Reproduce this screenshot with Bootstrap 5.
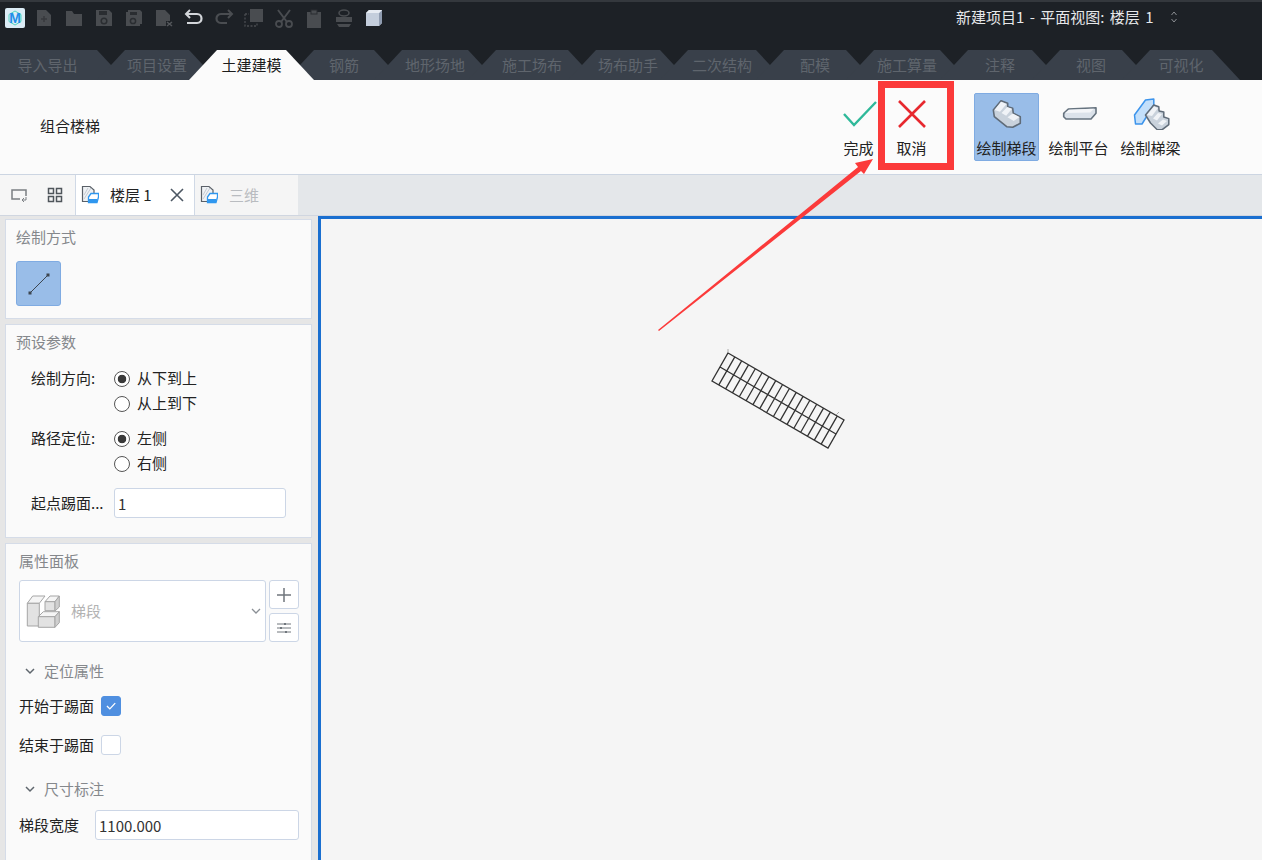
<!DOCTYPE html>
<html lang="zh-CN">
<head>
    <meta charset="UTF-8">
    <title>组合楼梯</title>
    <meta name="viewport" content="width=device-width, initial-scale=1">
    <link href="https://cdn.jsdelivr.net/npm/bootstrap@5.3.3/dist/css/bootstrap.min.css" rel="stylesheet">
    <style>
        html, body { height: 860px; overflow: hidden; }
        body {
            position: relative;
            background: #e6e6e6;
            font-family: "Noto Sans CJK SC", "Noto Sans", sans-serif;
            font-size: 15px;
            color: #222;
        }
        .app-head { height: 80px; background: #1d2126; border-top: 2px solid #34383d; }
        .quick-bar { height: 48px; padding-left: 5px; }
        .quick-btn { width: 30px; height: 32px; flex: none; }
        .logo-btn { width: 24px; margin-right: 0; }
        .doc-title { position: absolute; left: 956px; top: 6px; color: #e6e8ea; font-size: 15px; white-space: nowrap; word-spacing: 2px; }
        .doc-arrows { position: absolute; left: 1170px; top: 9px; }
        .ribbon-tabs { height: 30px; }
        .ribbon-tab {
            height: 30px; margin-left: -28px; flex: none;
            background: #39404a; color: #5f656d;
            clip-path: polygon(0 100%, 28px 0, calc(100% - 28px) 0, 100% 100%);
            font-size: 15px;
        }
        .ribbon-tab:nth-child(1) { margin-left: 0; width: 125px; clip-path: polygon(0 0, 97px 0, 100% 100%, 0 100%); padding-right: 30px; }
        .ribbon-tab:nth-child(2) { width: 120px; }
        .ribbon-tab:nth-child(3) { width: 125px; background: #fbfbfb; color: #1c1c1c; position: relative; z-index: 2; }
        .ribbon-tab:nth-child(4) { width: 116px; }
        .ribbon-tab:nth-child(5) { width: 122px; }
        .ribbon-tab:nth-child(6) { width: 128px; }
        .ribbon-tab:nth-child(7) { width: 120px; }
        .ribbon-tab:nth-child(8) { width: 124px; }
        .ribbon-tab:nth-child(9) { width: 118px; }
        .ribbon-tab:nth-child(10) { width: 122px; }
        .ribbon-tab:nth-child(11) { width: 120px; }
        .ribbon-tab:nth-child(12) { width: 118px; }
        .ribbon-tab:nth-child(13) { width: 118px; }

        .ribbon-body { height: 95px; background: #fbfbfb; border-bottom: 1px solid #ccd5e2; padding-left: 40px; padding-top: 13px; }
        .ribbon-name { width: 803px; padding-top: 22px; flex: none; }
        .tool-btn { height: 68px; flex: none; line-height: 1; }
        .tool-btn svg { display: block; margin: 0 auto; }
        .tool-ok { width: 31px; margin-right: 22px; padding-top: 6px; }
        .tool-no { width: 31px; margin-right: 47px; padding-top: 6px; }
        .tool-ok .tool-label, .tool-no .tool-label { margin-top: 11px; }
        .tool-stair { width: 65px; margin-right: 7px; padding-top: 4px; border: 1px solid transparent; border-radius: 2px; white-space: nowrap; }
        .tool-stair.is-on { background: #99bde8; border-color: #7fabe2; }
        .tool-label { display: block; white-space: nowrap; text-align: center; }
        .tool-stair .tool-label { margin-top: 10px; }

        .doc-tabs { height: 41px; background: #e4e7ea; border-bottom: 1px solid #d0d6e0; }
        .doc-side { width: 76px; background: #f6f6f6; border-right: 1px solid #d0d9e6; padding-right: 2px; }
        .doc-tab { height: 40px; padding-left: 5px; border-right: 1px solid #d0d9e6; }
        .doc-tab.is-open { width: 119px; background: #fff; }
        .doc-tab.is-idle { width: 103px; background: #f5f5f5; color: #b9bcc0; border-right: 0; }
        .doc-tab-name { margin-left: 11px; }
        .doc-tab-close { margin-left: auto; margin-right: 10px; }

        .work-area { height: 644px; }
        .side-col { width: 318px; padding: 3px 6px 0 5px; flex: none; }
        .side-panel { background: #fafafa; border: 1px solid #d5dce8; margin-bottom: 5px; }
        .panel-draw { height: 100px; padding: 6px 10px; }
        .panel-preset { height: 214px; padding: 6px 10px; }
        .panel-props { height: 340px; padding: 6px 11px 6px 13px; margin-bottom: 0; }
        .panel-title { color: #85888c; line-height: 22px; }
        .line-btn { width: 45px; height: 45px; margin-top: 13px; background: #99bde8; border: 1px solid #7fabe2; border-radius: 3px; }
        .preset-list { margin-top: 13px; }
        .preset-row { padding-left: 15px; height: 25px; }
        .preset-row.gap-next { margin-top: 10px; }
        .preset-row.has-input { margin-top: 12px; height: 30px; }
        .preset-label { width: 83px; flex: none; white-space: nowrap; }
        .side-col .form-check-input { margin: 0; float: none; flex: none; }
        .side-col input[type=radio] {
            width: 16px; height: 16px; margin-right: 7px;
            background-color: #fff; border: 1px solid #555; box-shadow: none;
        }
        .side-col input[type=radio]:checked {
            background-color: #fff; border-color: #555;
            --bs-form-check-bg-image: radial-gradient(circle, #3a3a3a 0, #3a3a3a 4px, transparent 4.6px);
        }
        .side-col .form-control {
            height: 30px; padding: 0 3px; border: 1px solid #ccd6e6; border-radius: 3px;
            font-size: 15px; color: #333; background: #fff; box-shadow: none; flex: none;
        }
        .start-input { width: 172px; }
        .side-col .width-input { width: 204px; }
        .type-row { margin-top: 8px; }
        .type-select { width: 247px; height: 62px; flex: none; background: #fff; border: 1px solid #ccd6e6; border-radius: 3px; color: #b3b3b3; padding: 0 4px 0 6px; }
        .type-name { margin-left: 11px; }
        .mini-col { margin-left: 3px; }
        .mini-btn { width: 30px; height: 29px; background: #fff; border: 1px solid #ccd6e6; border-radius: 3px; }
        .sect-head { height: 24px; color: #85888c; padding-left: 6px; }
        .sect-head span { margin-left: 9px; }
        .sect-first { margin-top: 17px; }
        .sect-next { margin-top: 22px; }
        .check-first { margin-top: 13px; height: 20px; }
        .check-next { margin-top: 19px; height: 20px; }
        .width-row { margin-top: 9px; }
        .prop-label { width: 82px; flex: none; white-space: nowrap; line-height: 20px; }
        .prop-label.is-short { width: 76px; }
        .side-col input[type=checkbox] { width: 20px; height: 20px; border: 1px solid #ccd6e6; border-radius: 3px; background-color: #fff; box-shadow: none; }
        .side-col input[type=checkbox]:checked {
            background-color: #4f8fe0; border-color: #4f8fe0;
            --bs-form-check-bg-image: url("data:image/svg+xml,%3csvg xmlns='http://www.w3.org/2000/svg' viewBox='0 0 20 20'%3e%3cpath fill='none' stroke='%23fff' stroke-width='1.500' d='M5.500 10l3.200 3.200 6-6.400'/%3e%3c/svg%3e");
        }
        .canvas-view { position: relative; flex: 1; background: #f5f5f5; border-left: 3px solid #1a6fd0; border-top: 3px solid #1a6fd0; }
        .stair-plan { position: absolute; left: 0; top: 0; }
        .note-box { position: absolute; left: 878px; top: 81px; width: 76px; height: 89px; border: 7px solid #fb3a3a; }
        .note-arrow { position: absolute; left: 0; top: 0; pointer-events: none; }
    </style>
</head>
<body>
<div class="app-head">
    <div class="quick-bar d-flex align-items-start">
        <div class="quick-btn logo-btn d-flex align-items-center">
            <svg width="20" height="20" viewBox="0 0 20 20"><rect width="20" height="20" rx="2" fill="#dcecf6"/><path d="M10 3l6 3.500v7L10 17l-6-3.500v-7z" fill="none" stroke="#53d6c0" stroke-width="1"/><text x="10" y="15" text-anchor="middle" font-family="Liberation Sans" font-weight="700" font-size="14" fill="#1e8fe8">M</text></svg>
        </div>
        <div class="quick-btn d-flex align-items-center justify-content-center"><svg width="18" height="18" viewBox="0 0 18 18"><path d="M2 1h9l5 5v11H2z" fill="#494c50"/><path d="M9 7v6M6 10h6" stroke="#37393d" stroke-width="1.500"/></svg></div>
        <div class="quick-btn d-flex align-items-center justify-content-center"><svg width="18" height="18" viewBox="0 0 18 18"><path d="M1 2h6l2 3h8v12H1z" fill="#494c50"/></svg></div>
        <div class="quick-btn d-flex align-items-center justify-content-center"><svg width="18" height="18" viewBox="0 0 18 18"><path d="M1 1h13l3 3v13H1z" fill="#494c50"/><rect x="4" y="2" width="8" height="4" fill="#2a2d31"/><circle cx="9" cy="12" r="2.800" fill="none" stroke="#2a2d31" stroke-width="1.500"/></svg></div>
        <div class="quick-btn d-flex align-items-center justify-content-center"><svg width="18" height="18" viewBox="0 0 18 18"><path d="M3 1h12l2 2v12h-2v2H1V3h2z" fill="#494c50"/><rect x="5" y="3" width="7" height="3" fill="#2a2d31"/><circle cx="8" cy="12" r="2.600" fill="none" stroke="#2a2d31" stroke-width="1.500"/></svg></div>
        <div class="quick-btn d-flex align-items-center justify-content-center"><svg width="18" height="18" viewBox="0 0 18 18"><path d="M1 1h9l5 5v6h-4v5H1z" fill="#494c50"/><path d="M12 13l5 4M17 13l-5 4" stroke="#55585c" stroke-width="1.500"/></svg></div>
        <div class="quick-btn d-flex align-items-center justify-content-center"><svg width="20" height="18" viewBox="0 0 20 18"><path d="M6 1L2 5l4 4" fill="none" stroke="#d3d6da" stroke-width="2"/><path d="M3 5h10c6 0 6 9 0 9H3" fill="none" stroke="#d3d6da" stroke-width="2.200"/></svg></div>
        <div class="quick-btn d-flex align-items-center justify-content-center"><svg width="20" height="18" viewBox="0 0 20 18"><path d="M14 1l4 4-4 4" fill="none" stroke="#4a4d51" stroke-width="2"/><path d="M17 5H7c-6 0-6 9 0 9h6" fill="none" stroke="#4a4d51" stroke-width="2.200"/></svg></div>
        <div class="quick-btn d-flex align-items-center justify-content-center"><svg width="20" height="18" viewBox="0 0 20 18"><rect x="6" y="0" width="13" height="13" fill="#494c50"/><path d="M1 5h4M1 5v12h12v-3" fill="none" stroke="#494c50" stroke-width="1.300" stroke-dasharray="2 1.500"/></svg></div>
        <div class="quick-btn d-flex align-items-center justify-content-center"><svg width="20" height="19" viewBox="0 0 20 19"><path d="M4 1l9 12M16 1L7 13" stroke="#494c50" stroke-width="2"/><circle cx="5" cy="15" r="3" fill="none" stroke="#494c50" stroke-width="1.800"/><circle cx="15" cy="15" r="3" fill="none" stroke="#494c50" stroke-width="1.800"/></svg></div>
        <div class="quick-btn d-flex align-items-center justify-content-center"><svg width="18" height="19" viewBox="0 0 18 19"><path d="M2 3h14v16H2z" fill="#494c50"/><rect x="6" y="1" width="6" height="4" fill="#494c50" stroke="#2a2d31"/></svg></div>
        <div class="quick-btn d-flex align-items-center justify-content-center"><svg width="20" height="19" viewBox="0 0 20 19"><ellipse cx="10" cy="4" rx="5" ry="3" fill="none" stroke="#494c50" stroke-width="1.600"/><path d="M2 8h16v5H2z" fill="#494c50"/><path d="M3 15h14l-2 3H5z" fill="#494c50"/></svg></div>
        <div class="quick-btn d-flex align-items-center justify-content-center"><svg width="18" height="18" viewBox="0 0 18 18"><path d="M1 4l3-3h13v13l-3 3H1z" fill="#c4cedc"/><path d="M14 4v13l3-3V1z" fill="#8f9cb0"/><path d="M1 4h13l3-3H4z" fill="#e6ebf2"/></svg></div>
    </div>
    <div class="doc-title">新建项目1 - 平面视图: 楼层 1</div>
    <svg class="doc-arrows" width="8" height="16" viewBox="0 0 8 16"><path d="M1.500 6L4 3l2.500 3M1.500 10L4 13l2.500-3" fill="none" stroke="#8b8e92" stroke-width="1"/></svg>
    <div class="ribbon-tabs d-flex">
        <div class="ribbon-tab d-flex align-items-center justify-content-center">导入导出</div>
        <div class="ribbon-tab d-flex align-items-center justify-content-center">项目设置</div>
        <div class="ribbon-tab d-flex align-items-center justify-content-center">土建建模</div>
        <div class="ribbon-tab d-flex align-items-center justify-content-center">钢筋</div>
        <div class="ribbon-tab d-flex align-items-center justify-content-center">地形场地</div>
        <div class="ribbon-tab d-flex align-items-center justify-content-center">施工场布</div>
        <div class="ribbon-tab d-flex align-items-center justify-content-center">场布助手</div>
        <div class="ribbon-tab d-flex align-items-center justify-content-center">二次结构</div>
        <div class="ribbon-tab d-flex align-items-center justify-content-center">配模</div>
        <div class="ribbon-tab d-flex align-items-center justify-content-center">施工算量</div>
        <div class="ribbon-tab d-flex align-items-center justify-content-center">注释</div>
        <div class="ribbon-tab d-flex align-items-center justify-content-center">视图</div>
        <div class="ribbon-tab d-flex align-items-center justify-content-center">可视化</div>
    </div>
</div>

<div class="ribbon-body d-flex">
    <div class="ribbon-name">组合楼梯</div>
    <div class="tool-btn tool-ok">
        <svg width="34" height="30" viewBox="0 0 34 30"><path d="M1 15l10 11L33 3" fill="none" stroke="#2fb99a" stroke-width="2.400"/></svg>
        <span class="tool-label">完成</span>
    </div>
    <div class="tool-btn tool-no">
        <svg width="30" height="30" viewBox="0 0 30 30"><path d="M2 2l26 26M28 2L2 28" fill="none" stroke="#e7282e" stroke-width="2.600"/></svg>
        <span class="tool-label">取消</span>
    </div>
    <div class="tool-btn tool-stair is-on">
        <svg width="30" height="32" viewBox="0 0 30 32">
            <path d="M1.300 12L9 2.700l6.700 2.600v3.400l5 1.600.6 5 7 3.400v6.600l-7.600 4-6-.6L2.300 18.700z" fill="#c9d2dc" stroke="#5f6b78" stroke-width="1.600" stroke-linejoin="round"/>
            <path d="M2.500 12L9 3.800l5.500 2.200L8 13.800zM9.500 15l5.700-6 4.800 1.800-5.800 7zM15.500 19.200l5.300-3.600 6.700 3.500-5.800 3.900z" fill="#f0f3f7"/>
        </svg>
        <span class="tool-label">绘制梯段</span>
    </div>
    <div class="tool-btn tool-stair">
        <svg width="36" height="32" viewBox="0 0 36 32">
            <path d="M2.700 15.300L7.300 11 35 9.700v5.600L30 21H5l-2.300-2.300z" fill="#dbe2ea" stroke="#66737f" stroke-width="1.600" stroke-linejoin="round"/>
            <path d="M4 15l4-3.300 25-1-3.800 3.800z" fill="#f3f5f8"/>
        </svg>
        <span class="tool-label">绘制平台</span>
    </div>
    <div class="tool-btn tool-stair">
        <svg width="38" height="32" viewBox="0 0 38 32">
            <path d="M2.500 17L13.500 2l8.300-1v6L10 26H3.500z" fill="#c3dffa" stroke="#3c94ec" stroke-width="1.500" stroke-linejoin="round"/>
            <path d="M13.500 17l8.300-10 5 1.700.3 4.300 4.700 1v5l5 1.600v6l-6.600 5.100h-5l-6.700-6.700z" fill="#c9d2dc" stroke="#5f6b78" stroke-width="1.500" stroke-linejoin="round"/>
            <path d="M15 17l7-8.500 4 1.500-6 8zM21 20.500l5-5.500 4 1-5 6.500zM26 25.500l5-4 4 1.500-5 4.500z" fill="#f0f3f7"/>
        </svg>
        <span class="tool-label">绘制梯梁</span>
    </div>
</div>

<div class="doc-tabs d-flex">
    <div class="doc-side d-flex align-items-center">
        <div class="flex-fill d-flex justify-content-center"><svg width="18" height="14" viewBox="0 0 18 14"><path d="M10 11H2V2h14v6" fill="none" stroke="#7b7f83" stroke-width="1.500"/><path d="M16 9v3h-4m2-2l-2 2 2 2" fill="none" stroke="#7b7f83"/></svg></div>
        <div class="flex-fill d-flex justify-content-center"><svg width="16" height="16" viewBox="0 0 16 16"><path d="M1.500 1.500h5v5h-5zM9.500 1.500h5v5h-5zM1.500 9.500h5v5h-5zM9.500 9.500h5v5h-5z" fill="none" stroke="#4f555b" stroke-width="1.500"/></svg></div>
    </div>
    <div class="doc-tab is-open d-flex align-items-center">
        <svg width="18" height="20" viewBox="0 0 18 20"><path d="M1.500 16.500v-15H9L13 5v11.500z" fill="#eef1f4" stroke="#5a6068" stroke-width="1.200"/><path d="M3 10l4-7M3 14l7-11" stroke="#c6cbd2"/><path d="M7.500 12L10 8.500h7.500V12L16 17.500H7.500z" fill="#fff" stroke="#2f97ef" stroke-width="1.300"/><path d="M8 14h8v3H8z" fill="#2f97ef"/></svg>
        <span class="doc-tab-name">楼层 1</span>
        <svg class="doc-tab-close" width="14" height="14" viewBox="0 0 14 14"><path d="M1 1l12 12M13 1L1 13" stroke="#4c5763" stroke-width="1.600"/></svg>
    </div>
    <div class="doc-tab is-idle d-flex align-items-center">
        <svg width="18" height="20" viewBox="0 0 18 20"><path d="M1.500 16.500v-15H9L13 5v11.500z" fill="#eef1f4" stroke="#5a6068" stroke-width="1.200"/><path d="M3 10l4-7M3 14l7-11" stroke="#c6cbd2"/><path d="M7.500 12L10 8.500h7.500V12L16 17.500H7.500z" fill="#fff" stroke="#2f97ef" stroke-width="1.300"/><path d="M8 14h8v3H8z" fill="#2f97ef"/></svg>
        <span class="doc-tab-name">三维</span>
    </div>
</div>

<div class="work-area d-flex">
    <div class="side-col">
        <div class="side-panel panel-draw">
            <div class="panel-title">绘制方式</div>
            <div class="line-btn d-flex align-items-center justify-content-center">
                <svg width="24" height="24" viewBox="0 0 24 24"><path d="M3 21L21 3" stroke="#3d4650" stroke-width="1"/><rect x="1.500" y="19.500" width="3" height="3" fill="#3d4650"/><rect x="19.500" y="1.500" width="3" height="3" fill="#3d4650"/></svg>
            </div>
        </div>
        <div class="side-panel panel-preset">
            <div class="panel-title">预设参数</div>
            <div class="preset-list">
                <div class="preset-row d-flex align-items-center"><span class="preset-label">绘制方向:</span><input class="form-check-input" type="radio" name="dir" checked><span>从下到上</span></div>
                <div class="preset-row d-flex align-items-center"><span class="preset-label"></span><input class="form-check-input" type="radio" name="dir"><span>从上到下</span></div>
                <div class="preset-row gap-next d-flex align-items-center"><span class="preset-label">路径定位:</span><input class="form-check-input" type="radio" name="pos" checked><span>左侧</span></div>
                <div class="preset-row d-flex align-items-center"><span class="preset-label"></span><input class="form-check-input" type="radio" name="pos"><span>右侧</span></div>
                <div class="preset-row has-input d-flex align-items-center"><span class="preset-label">起点踢面...</span><input class="form-control start-input" type="text" value="1"></div>
            </div>
        </div>
        <div class="side-panel panel-props">
            <div class="panel-title">属性面板</div>
            <div class="type-row d-flex">
                <div class="type-select d-flex align-items-center">
                    <svg width="34" height="34" viewBox="0 0 34 34" stroke="#a5a5a5" stroke-linejoin="round">
                        <path d="M1.300 9.300L6.700 2H19l-5.700 7.300z" fill="#f5f5f5"/><path d="M1.300 9.300h12V32h-12z" fill="#e2e2e2"/>
                        <path d="M19 7.700L24 2h9.300L29 7.700z" fill="#f5f5f5"/><path d="M19 7.700h10v9H19z" fill="#e2e2e2"/><path d="M29 7.700L33.300 2v11L29 17z" fill="#cfcfcf"/>
                        <path d="M12.300 22.700l5-5h16l-4.300 5z" fill="#f5f5f5"/><path d="M12.300 22.700H29v10.600H12.300z" fill="#e2e2e2"/><path d="M29 22.700l4.300-5v11L29 33.300z" fill="#cfcfcf"/>
                    </svg>
                    <span class="type-name">梯段</span>
                    <svg class="ms-auto" width="10" height="7" viewBox="0 0 10 7"><path d="M1 1l4 4 4-4" fill="none" stroke="#8a8f95" stroke-width="1.300"/></svg>
                </div>
                <div class="mini-col d-flex flex-column justify-content-between">
                    <div class="mini-btn d-flex align-items-center justify-content-center"><svg width="14" height="14" viewBox="0 0 14 14"><path d="M7 0v14M0 7h14" stroke="#70767c" stroke-width="1.500"/></svg></div>
                    <div class="mini-btn d-flex align-items-center justify-content-center"><svg width="14" height="12" viewBox="0 0 14 12"><path d="M0 2h14M0 6h14M0 10h14" stroke="#70767c"/><path d="M8 1v2M4 5v2M9 9v2" stroke="#70767c" stroke-width="2"/></svg></div>
                </div>
            </div>
            <div class="sect-head sect-first d-flex align-items-center"><svg width="10" height="7" viewBox="0 0 10 7"><path d="M1 1l4 4 4-4" fill="none" stroke="#5f666d" stroke-width="1.500"/></svg><span>定位属性</span></div>
            <div class="check-first d-flex align-items-center"><span class="prop-label">开始于踢面</span><input class="form-check-input" type="checkbox" checked></div>
            <div class="check-next d-flex align-items-center"><span class="prop-label">结束于踢面</span><input class="form-check-input" type="checkbox"></div>
            <div class="sect-head sect-next d-flex align-items-center"><svg width="10" height="7" viewBox="0 0 10 7"><path d="M1 1l4 4 4-4" fill="none" stroke="#5f666d" stroke-width="1.500"/></svg><span>尺寸标注</span></div>
            <div class="width-row d-flex align-items-center"><span class="prop-label is-short">梯段宽度</span><input class="form-control width-input" type="text" value="1100.000"></div>
        </div>
    </div>
    <div class="canvas-view">
        <svg id="stairPlan" class="stair-plan" width="941" height="641" viewBox="321 219 941 641"></svg>
    </div>
</div>

<div class="note-box"></div>
<svg class="note-arrow" width="1262" height="860" viewBox="0 0 1262 860">
    <path d="M658 330L858 167l-3-4 18-4-9 15-3-3L659 331z" fill="#fb3a3a"/>
</svg>

<script>
// stair plan: quad corners, two rows, 17 treads
const corners = [[728, 353], [844, 420], [828, 448], [712, 381]];
const plan = document.getElementById('stairPlan');
const lerp = (a, b, t) => [a[0] + (b[0] - a[0]) * t, a[1] + (b[1] - a[1]) * t];
let d = `M${corners.join('L')}Z`;
d += `M${lerp(corners[0], corners[3], 0.5)}L${lerp(corners[1], corners[2], 0.5)}`;
for (let i = 1; i < 17; i++) {
    d += `M${lerp(corners[0], corners[1], i / 17)}L${lerp(corners[3], corners[2], i / 17)}`;
}
plan.innerHTML = `<path d="${d}" fill="none" stroke="#333" stroke-width="1.300"/>`
    + `<path d="M728 353v-4M836 415l3-3" stroke="#aaa" fill="none"/>`;
</script>
<script src="https://cdn.jsdelivr.net/npm/bootstrap@5.3.3/dist/js/bootstrap.bundle.min.js"></script>
</body>
</html>
